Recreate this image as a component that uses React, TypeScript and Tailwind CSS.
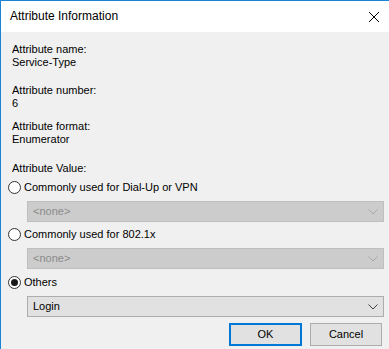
import React from "react";

function Chevron({ color }: { color: string }) {
  return (
    <svg width="10" height="6" viewBox="0 0 10 6" className="block">
      <path d="M0.5 0.5 L5 5 L9.5 0.5" fill="none" stroke={color} strokeWidth="1" />
    </svg>
  );
}

function Radio({ checked, label }: { checked?: boolean; label: string }) {
  return (
    <div className="flex items-center h-[15px]">
      <div className="ml-[8px] w-[13px] h-[13px] rounded-full border border-[#333333] bg-white flex items-center justify-center">
        {checked && <div className="w-[7px] h-[7px] rounded-full bg-[#1a1a1a]" />}
      </div>
      <span className="ml-[3px] leading-[13px]">{label}</span>
    </div>
  );
}

function Combo({ text, disabled }: { text: string; disabled?: boolean }) {
  return (
    <div
      className={
        disabled
          ? "ml-[27px] w-[357px] h-[21px] border border-[#bfbfbf] bg-[#cccccc] text-[#8a8a8a] flex items-center justify-between pl-[5px] pr-[5px]"
          : "ml-[27px] w-[357px] h-[21px] border border-[#adadad] bg-[#e1e1e1] text-black flex items-center justify-between pl-[5px] pr-[5px]"
      }
    >
      <span className="leading-[13px]">{text}</span>
      <Chevron color={disabled ? "#a6a6a6" : "#404040"} />
    </div>
  );
}

export default function App() {
  return (
    <div
      className="w-[389px] h-[349px] bg-[#f0f0f0] border-t border-l border-[#1883d7] text-[11px] text-black overflow-hidden"
      style={{ fontFamily: '"Liberation Sans", Arial, sans-serif' }}
    >
      <div className="h-[31px] bg-white flex items-center justify-between pl-[9px] pr-[9px]">
        <span className="text-[12px] leading-[15px]">Attribute Information</span>
        <svg width="12" height="12" viewBox="0 0 12 12" className="block">
          <path d="M1 1 L11 11 M11 1 L1 11" stroke="#000" strokeWidth="1" />
        </svg>
      </div>

      <div className="pl-[11px] pt-[11px] leading-[13px]">
        <div>Attribute name:</div>
        <div>Service-Type</div>
        <div className="mt-[15px]">Attribute number:</div>
        <div>6</div>
        <div className="mt-[10px]">Attribute format:</div>
        <div>Enumerator</div>
        <div className="mt-[16px]">Attribute Value:</div>
      </div>

      <div className="mt-[5px] -ml-[1px]">
        <Radio label="Commonly used for Dial-Up or VPN" />
        <div className="mt-[6px]">
          <Combo text="<none>" disabled />
        </div>
        <div className="mt-[5px]">
          <Radio label="Commonly used for 802.1x" />
        </div>
        <div className="mt-[6px]">
          <Combo text="<none>" disabled />
        </div>
        <div className="mt-[6px]">
          <Radio checked label="Others" />
        </div>
        <div className="mt-[6px]">
          <Combo text="Login" />
        </div>
      </div>

      <div className="mt-[6px] flex justify-end gap-[8px] pr-[7px]">
        <button className="w-[73px] h-[23px] border-2 border-[#0078d7] bg-[#e1e1e1] text-[11px] leading-[13px]">
          OK
        </button>
        <button className="w-[72px] h-[23px] border border-[#adadad] bg-[#e1e1e1] text-[11px] leading-[13px]">
          Cancel
        </button>
      </div>
    </div>
  );
}
